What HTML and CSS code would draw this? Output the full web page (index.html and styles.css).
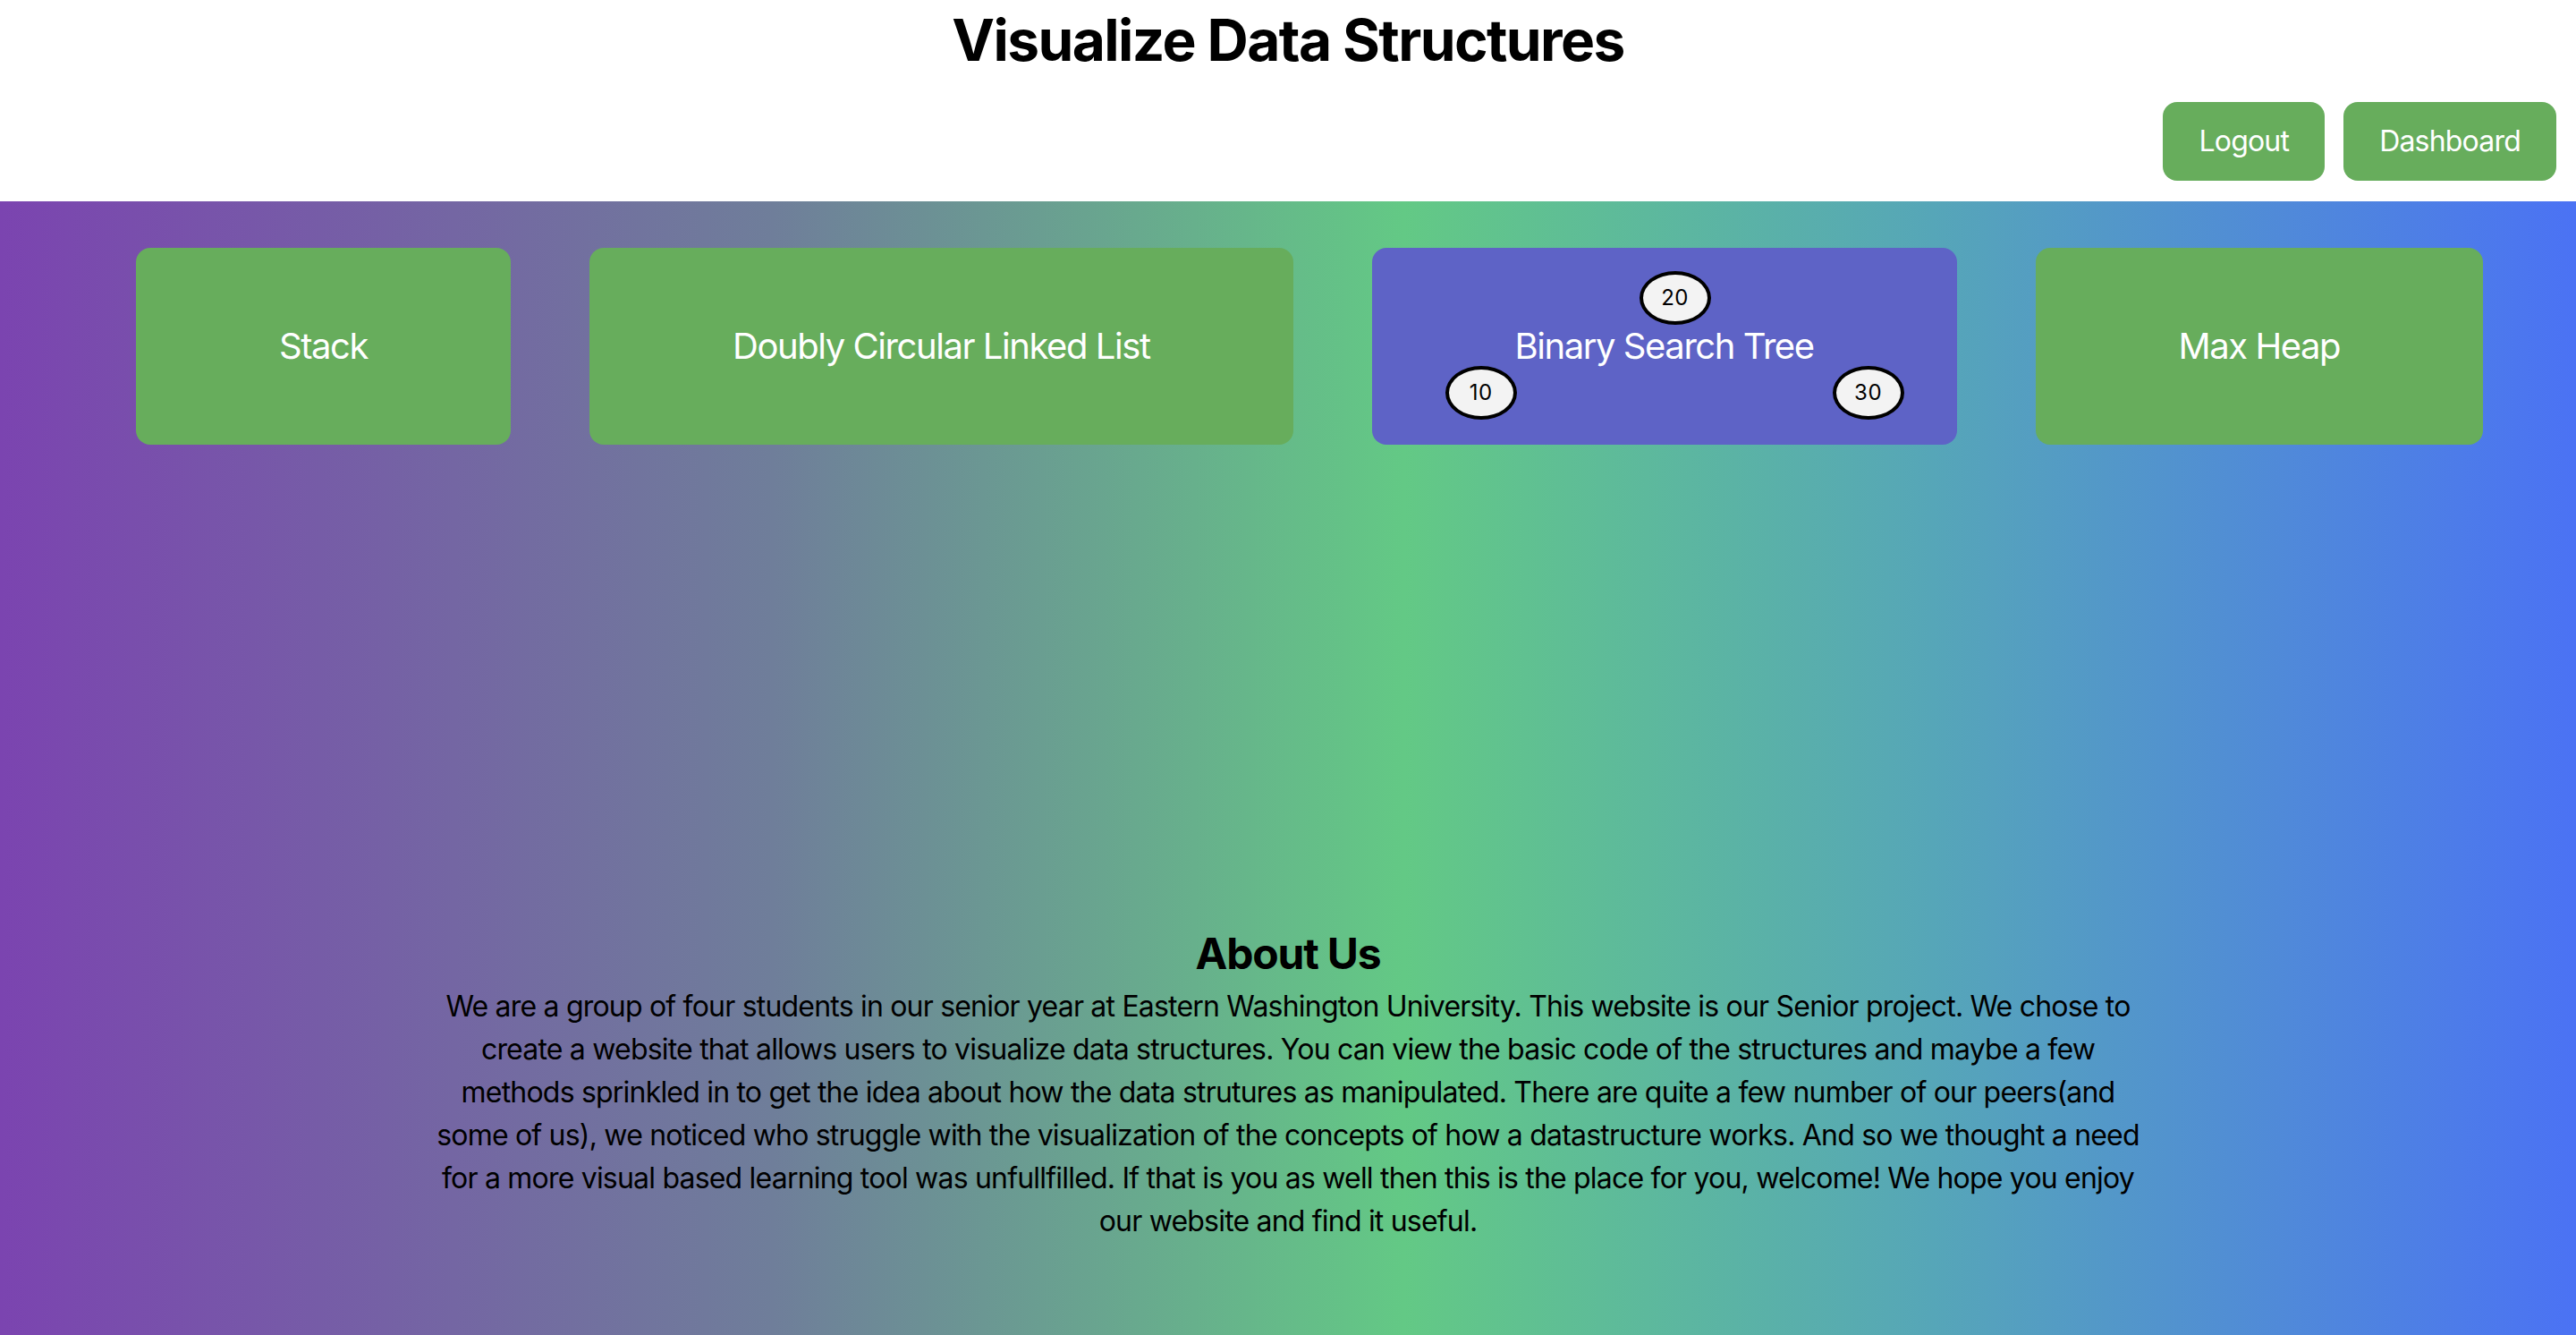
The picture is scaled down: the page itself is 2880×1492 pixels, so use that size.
FILE: index.html
```html
<!DOCTYPE html>
<html lang="en">
<head>
<meta charset="utf-8">
<title>Visualize Data Structures</title>
<link rel="stylesheet" href="styles.css">
</head>
<body>
<header class="site-header">
  <h1 class="title">Visualize Data Structures</h1>
  <nav class="actions">
    <button class="btn">Logout</button>
    <button class="btn">Dashboard</button>
  </nav>
</header>
<main class="main">
  <section class="cards">
    <a class="card">Stack</a>
    <a class="card">Doubly Circular Linked List</a>
    <a class="card card-bst">Binary Search Tree
      <span class="node node-root">20</span>
      <span class="node node-left">10</span>
      <span class="node node-right">30</span>
    </a>
    <a class="card">Max Heap</a>
  </section>
  <section class="about">
    <h2 class="about-title">About Us</h2>
    <p class="about-text">We are a group of four students in our senior year at Eastern Washington University. This website is our Senior project. We chose to create a website that allows users to visualize data structures. You can view the basic code of the structures and maybe a few methods sprinkled in to get the idea about how the data strutures as manipulated. There are quite a few number of our peers(and some of us), we noticed who struggle with the visualization of the concepts of how a datastructure works. And so we thought a need for a more visual based learning tool was unfullfilled. If that is you as well then this is the place for you, welcome! We hope you enjoy our website and find it useful.</p>
  </section>
</main>
</body>
</html>
```
FILE: styles.css
```css
* { box-sizing: border-box; }
html, body { margin: 0; padding: 0; }
body {
  font-family: Inter, "Noto Sans", "Liberation Sans", sans-serif;
  color: #000;
  background: #fff;
}
.site-header {
  background: #fff;
  height: 225px;
  display: flex;
  flex-direction: column;
}
.title {
  margin: 0;
  padding-top: 6px;
  font-size: 64px;
  font-weight: 700;
  line-height: 77px;
  letter-spacing: -0.025em;
  text-align: center;
}
.actions {
  display: flex;
  justify-content: flex-end;
  gap: 21px;
  margin-top: 31px;
  padding-right: 22px;
}
.btn {
  font-family: inherit;
  font-size: 32px;
  line-height: 40px;
  letter-spacing: -0.025em;
  color: #fff;
  background: #67ad5c;
  border: none;
  border-radius: 16px;
  padding: 24px 40px;
  cursor: pointer;
}
.main {
  min-height: 1267px;
  background: linear-gradient(90deg, #7b44b0 0%, #6f7e9a 30%, #63c985 54.5%, #56a6b8 75%, #4b72f4 100%);
  padding-top: 52px;
  padding-bottom: 40px;
}
.cards {
  display: flex;
  gap: 88px;
  padding-left: 152px;
}
.card {
  position: relative;
  display: block;
  background: #67ad5c;
  color: #fff;
  font-size: 40px;
  line-height: 48px;
  letter-spacing: -0.036em;
  padding: 86px 160px;
  border-radius: 16px;
  white-space: nowrap;
  text-decoration: none;
}
.card-bst { background: #5e63c6; }
.node {
  position: absolute;
  width: 80px;
  height: 60px;
  border: 4px solid #000;
  border-radius: 50%;
  background: #f3f3f3;
  color: #000;
  font-size: 24px;
  line-height: 52px;
  letter-spacing: 0.02em;
  text-align: center;
}
.node-root { left: 299px; top: 26px; }
.node-left { left: 82px; top: 132px; }
.node-right { left: 515px; top: 132px; }
.about {
  width: 1920px;
  margin: 540px auto 0;
  text-align: center;
}
.about-title {
  margin: 0 0 6px;
  font-size: 48px;
  line-height: 58px;
  font-weight: 700;
  letter-spacing: -0.025em;
}
.about-text {
  margin: 0;
  font-size: 32px;
  line-height: 48px;
  letter-spacing: -0.025em;
}
```
